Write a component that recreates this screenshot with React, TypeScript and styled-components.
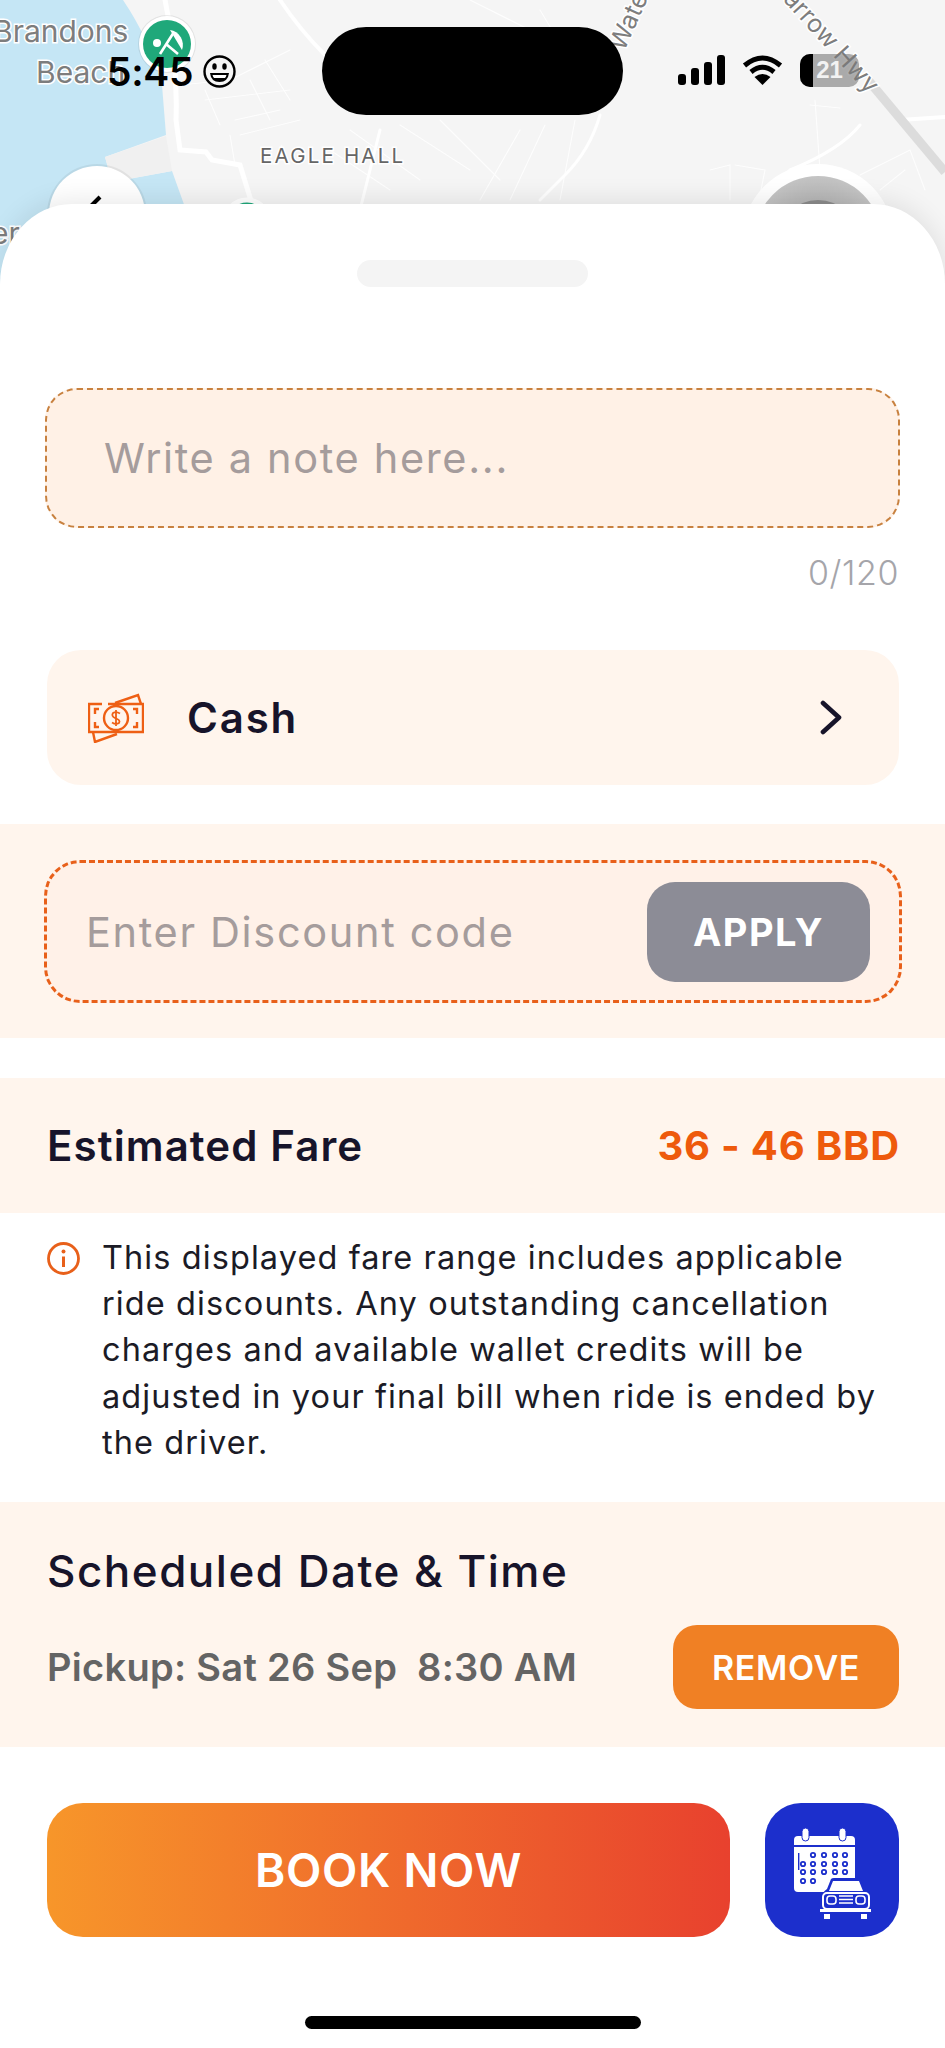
import React from 'react';
import styled, { createGlobalStyle } from 'styled-components';

const GlobalStyle = createGlobalStyle`
  html, body {
    margin: 0;
    padding: 0;
    background: #ffffff;
  }
  * {
    box-sizing: border-box;
  }
`;

const Page = styled.div`
  position: relative;
  width: 945px;
  height: 2048px;
  overflow: hidden;
  background: #ffffff;
  font-family: Inter, "Noto Sans", sans-serif;
`;

const MapBackdrop = styled.svg`
  position: absolute;
  top: 0;
  left: 0;
  width: 945px;
  height: 320px;
`;

const StatusBar = styled.div`
  position: relative;
  height: 115px;
  padding: 27px 0 0 107px;
  display: flex;
  align-items: flex-start;
`;

const Clock = styled.div`
  display: flex;
  align-items: center;
  gap: 10px;
  width: 215px;
  height: 88px;
  font-size: 39px;
  font-weight: 600;
  letter-spacing: -0.3px;
  color: #000000;
  font-family: Inter, sans-serif;
`;

const Island = styled.div`
  width: 301px;
  height: 88px;
  border-radius: 44px;
  background: #000000;
`;

const StatusIcons = styled.div`
  display: flex;
  align-items: center;
  gap: 17px;
  height: 86px;
  margin-left: 55px;
`;

const BatteryShell = styled.div`
  position: relative;
  width: 59px;
  height: 33px;
  border-radius: 10px;
  overflow: hidden;
  display: flex;
  align-items: center;
  justify-content: center;
  background: rgba(120, 120, 120, 0.6);
  color: #f2f2f2;
  font-size: 24px;
  font-weight: 700;
  font-family: "Liberation Sans", sans-serif;
`;

const BatteryFill = styled.div`
  position: absolute;
  top: 0;
  left: 0;
  width: 13px;
  height: 100%;
  background: #000000;
`;

const Sheet = styled.div`
  position: relative;
  margin-top: 89px;
  height: 1844px;
  background: #ffffff;
  border-radius: 72px 72px 0 0 / 80px 80px 0 0;
  box-shadow: 0 -4px 26px rgba(0, 0, 0, 0.09);
  padding-top: 56px;
  display: flex;
  flex-direction: column;
`;

const Handle = styled.div`
  align-self: center;
  width: 231px;
  height: 27px;
  border-radius: 14px;
  background: #f4f4f4;
`;

const NoteBox = styled.div`
  margin: 101px 45px 0 45px;
  height: 140px;
  border: 2px dashed #c8813f;
  border-radius: 32px;
  background: #fff1e6;
  padding-left: 57px;
  display: flex;
  align-items: center;
`;

const Placeholder = styled.span`
  font-size: 41.5px;
  letter-spacing: 1.65px;
  color: #a59c9c;
  white-space: nowrap;
`;

const Counter = styled.div`
  margin: 23px 46px 0 0;
  text-align: right;
  font-size: 34px;
  line-height: 44px;
  font-weight: 300;
  letter-spacing: 0.6px;
  color: #a5a5aa;
`;

const PaymentRow = styled.div`
  margin: 55px 46px 0 47px;
  height: 135px;
  border-radius: 34px;
  background: #fff5ed;
  padding: 0 57px 0 41px;
  display: flex;
  align-items: center;
`;

const PaymentLabel = styled.span`
  flex: 1;
  margin-left: 43px;
  font-size: 42px;
  font-weight: 600;
  letter-spacing: 1.8px;
  color: #17142a;
`;

const DiscountBand = styled.div`
  margin-top: 39px;
  height: 214px;
  padding: 36px 43px 0 44px;
  background: #fff5ed;
`;

const DiscountBox = styled.div`
  height: 143px;
  border: 3px dashed #e8601a;
  border-radius: 36px;
  background: #fff1e8;
  padding: 0 29px 0 39px;
  display: flex;
  align-items: center;
  justify-content: space-between;
`;

const ApplyButton = styled.div`
  width: 223px;
  height: 100px;
  border-radius: 28px;
  background: #8c8c96;
  color: #ffffff;
  font-size: 38px;
  font-weight: 700;
  letter-spacing: 1.5px;
  display: flex;
  align-items: center;
  justify-content: center;
`;

const FareBand = styled.div`
  margin-top: 40px;
  height: 135px;
  padding: 0 45px 0 47px;
  background: #fff5ed;
  display: flex;
  align-items: center;
  justify-content: space-between;
`;

const FareTitle = styled.span`
  font-size: 42px;
  font-weight: 600;
  letter-spacing: 1.1px;
  color: #17142a;
`;

const FareValue = styled.span`
  font-size: 40px;
  font-weight: 700;
  letter-spacing: 0.8px;
  color: #ee5a0c;
`;

const InfoRow = styled.div`
  margin-top: 22px;
  padding: 0 30px 0 47px;
  display: flex;
  gap: 22px;
  align-items: flex-start;
`;

const InfoIconWrap = styled.div`
  flex: none;
  width: 33px;
  height: 46px;
  display: flex;
  align-items: center;
`;

const InfoText = styled.p`
  margin: 0;
  font-size: 32.5px;
  line-height: 46.2px;
  letter-spacing: 1.08px;
  white-space: nowrap;
  color: #1b1b26;
`;

const ScheduleBand = styled.div`
  margin-top: 36px;
  height: 245px;
  padding: 39px 46px 0 47px;
  background: #fff5ed;
`;

const ScheduleTitle = styled.div`
  font-size: 44px;
  line-height: 60px;
  font-weight: 500;
  letter-spacing: 1.5px;
  color: #17142a;
`;

const ScheduleRow = styled.div`
  margin-top: 24px;
  display: flex;
  align-items: center;
  justify-content: space-between;
`;

const PickupText = styled.span`
  font-size: 38px;
  font-weight: 600;
  letter-spacing: 0.3px;
  color: #646464;
  white-space: pre;
`;

const RemoveButton = styled.div`
  width: 226px;
  height: 84px;
  border-radius: 24px;
  background: #f08024;
  color: #ffffff;
  font-size: 34px;
  font-weight: 600;
  letter-spacing: 0.6px;
  display: flex;
  align-items: center;
  justify-content: center;
`;

const ActionRow = styled.div`
  margin-top: 56px;
  padding: 0 46px 0 47px;
  display: flex;
  gap: 35px;
`;

const BookButton = styled.div`
  flex: 1;
  height: 134px;
  border-radius: 36px;
  background: linear-gradient(90deg, #f7962a 0%, #e8412e 100%);
  color: #ffffff;
  font-size: 46px;
  font-weight: 600;
  letter-spacing: 0.7px;
  display: flex;
  align-items: center;
  justify-content: center;
`;

const ScheduleButton = styled.div`
  flex: none;
  width: 134px;
  height: 134px;
  border-radius: 36px;
  background: #1c2fcc;
`;

const HomeIndicator = styled.div`
  align-self: center;
  margin-top: 79px;
  width: 336px;
  height: 13px;
  border-radius: 7px;
  background: #000000;
`;

const MapLabel = styled.text<{ $tone?: string }>`
  font-family: Inter, sans-serif;
  fill: ${p => p.$tone || '#7d7d7d'};
  stroke: #ffffff;
  stroke-width: 3px;
  paint-order: stroke;
`;

const MapRoads = () => (
  <g fill="none" stroke="#ffffff" strokeLinecap="round">
    <path d="M165 0 Q178 60 176 120 L180 150 L206 152 L212 160 L240 165 L252 204" strokeWidth="5" />
    <path d="M280 0 Q300 30 325 55" strokeWidth="4" />
    <path d="M380 130 L360 210" strokeWidth="3" />
    <g strokeWidth="1.2" opacity="0.8">
      <path d="M180 85 L230 80 L290 50 M205 100 L290 90 M235 120 L280 110 M240 135 L300 120" />
      <path d="M250 80 L270 120 M265 60 L290 100 M205 90 L220 125 M230 135 L235 165" />
      <path d="M330 150 L390 190 M350 130 L420 180 M400 125 L470 170 M440 120 L500 180" />
      <path d="M520 130 L480 200 M545 125 L510 200 M575 120 L560 200" />
      <path d="M470 0 L530 30 M540 10 L570 60 M500 40 L560 70" />
      <path d="M815 100 L820 170 M810 105 L840 108 M710 170 L730 165 L730 200 M735 165 L765 170 L760 195" />
      <path d="M860 175 L910 150 L925 190 M880 190 L905 170" />
    </g>
    <path d="M600 115 Q590 150 565 175 L540 200" strokeWidth="3" />
    <path d="M860 125 Q840 150 790 170 L760 200" strokeWidth="3" />
    <path d="M900 120 L945 117" strokeWidth="4" />
  </g>
);

const MapCanvas = () => (
  <MapBackdrop viewBox="0 0 945 320">
    <defs>
      <radialGradient id="dim" cx="50%" cy="50%" r="50%">
        <stop offset="0%" stopColor="#9e9e9e" />
        <stop offset="100%" stopColor="#c4c4c4" />
      </radialGradient>
    </defs>
    <rect width="945" height="320" fill="#f5f5f5" />
    <path
      d="M0 0 H123 Q150 40 162 85 L166 135 L105 157 L112 182 L172 171 L186 210 L190 320 H0 Z"
      fill="#c5e6f5"
    />
    <path d="M105 157 L166 136 L172 171 L112 182 Z" fill="#f0f0f0" />
    <MapRoads />
    <path d="M868 80 L945 172" stroke="#dcdcdc" strokeWidth="9" fill="none" />
    <MapLabel x="-7" y="42" fontSize="30">Brandons</MapLabel>
    <MapLabel x="36" y="83" fontSize="30">Beach</MapLabel>
    <MapLabel x="-28" y="244" fontSize="30">Per</MapLabel>
    <MapLabel x="260" y="163" fontSize="20.5" letterSpacing="2.2" $tone="#666666">EAGLE HALL</MapLabel>
    <MapLabel x="624" y="52" fontSize="25" transform="rotate(-66 624 52)">Water</MapLabel>
    <MapLabel x="770" y="-14" fontSize="25" transform="rotate(48 770 -14)">Harrow Hwy</MapLabel>

    <circle cx="167" cy="44" r="29" fill="#000000" opacity="0.08" />
    <circle cx="167" cy="44" r="28" fill="#ffffff" />
    <circle cx="167" cy="44" r="24" fill="#1fa87a" />
    <path d="M170 30 A15 15 0 0 1 182 50 Z" fill="#ffffff" />
    <path d="M174 32 L160 54 M166 44 L178 54" stroke="#ffffff" strokeWidth="2.6" fill="none" />
    <circle cx="157" cy="43" r="4" fill="#ffffff" />
    <circle cx="247" cy="222" r="22" fill="#1fa87a" stroke="#ffffff" strokeWidth="5" />

    <circle cx="97" cy="214" r="50" fill="#000000" opacity="0.06" />
    <circle cx="97" cy="214" r="48" fill="#ffffff" />
    <path d="M100 197 L90 207" stroke="#000000" strokeWidth="4" fill="none" />
    <circle cx="818" cy="240" r="76" fill="#ffffff" />
    <circle cx="818" cy="240" r="64" fill="url(#dim)" />
    <circle cx="818" cy="240" r="40" fill="#8b8b8b" />
  </MapBackdrop>
);

const SmileIcon = () => (
  <svg width="33" height="33" viewBox="0 0 33 33">
    <circle cx="16.5" cy="16.5" r="15" fill="none" stroke="#000" strokeWidth="2.4" />
    <ellipse cx="11.5" cy="11.5" rx="2.2" ry="3.2" fill="#000" />
    <ellipse cx="21.5" cy="11.5" rx="2.2" ry="3.2" fill="#000" />
    <path d="M7 18 H26 Q25 27 16.5 27 Q8 27 7 18 Z" fill="#000" />
    <path d="M9.5 20 H23.5 Q23 22 22 23 H11 Q10 22 9.5 20 Z" fill="#fff" />
  </svg>
);

const SignalIcon = () => (
  <svg width="47" height="30" viewBox="0 0 47 30" fill="#000">
    <rect x="0" y="19" width="8" height="11" rx="3" />
    <rect x="13" y="13" width="8" height="17" rx="3" />
    <rect x="26" y="7" width="8" height="23" rx="3" />
    <rect x="39" y="0" width="8" height="30" rx="3" />
  </svg>
);

const WifiIcon = () => (
  <svg width="41" height="30" viewBox="0 0 41 30" fill="none" stroke="#000" strokeWidth="5">
    <path d="M2.5 10.5 Q20.5 -4.5 38.5 10.5" />
    <path d="M9 17 Q20.5 7.5 32 17" />
    <path d="M20.5 30 L12.5 22 Q20.5 16 28.5 22 Z" fill="#000" stroke="none" />
  </svg>
);

const CashIcon = () => (
  <svg width="56" height="50" viewBox="0 0 56 50" fill="none" stroke="#ee5f14" strokeWidth="2.4" style={{ flex: 'none' }}>
    <path d="M27 10 L50 2 L53 11" />
    <path d="M5 39 L7 49 L29 41" />
    <path d="M14 11 H1 V39 H55 V11 H20" />
    <circle cx="28" cy="25" r="12" fill="#fff5ed" />
    <path d="M7 21 V16 H11 M49 21 V16 H45 M7 29 V34 H11 M49 29 V34 H45" />
    <path d="M32 20.5 Q28 18 25 20 Q23 23 27 25 Q33 27 31 30 Q28 32 24 29.5 M28 17 V33" strokeWidth="1.8" />
  </svg>
);

const ChevronIcon = () => (
  <svg width="22" height="35" viewBox="0 0 22 35" fill="none" stroke="#17142a" strokeWidth="4.6" strokeLinecap="round" strokeLinejoin="round" style={{ flex: 'none' }}>
    <path d="M3 3 L19 17.5 L3 32" />
  </svg>
);

const InfoIcon = () => (
  <svg width="33" height="33" viewBox="0 0 33 33" fill="none" stroke="#e8601a" strokeWidth="2.8">
    <circle cx="16.5" cy="16.5" r="15" />
    <path d="M16.5 14.5 V25" strokeWidth="3" />
    <circle cx="16.5" cy="9.5" r="2" fill="#e8601a" stroke="none" />
  </svg>
);

// dot grid of the calendar, first row and last row are shorter
const dotRows = [
  { y: 52, cols: [48, 59, 70, 80] },
  { y: 61, cols: [38, 48, 59, 70, 80] },
  { y: 69, cols: [38, 48, 59, 70, 80] },
  { y: 78, cols: [38, 48] },
];

const CalendarCarIcon = () => (
  <svg width="134" height="134" viewBox="0 0 134 134">
    <path d="M29 37 Q29 33 33 33 H86 Q90 33 90 37 V42 H29 Z" fill="#fff" />
    <path d="M29 44 H90 V89 H33 Q29 89 29 85 Z" fill="#fff" />
    <rect x="37" y="25" width="7" height="13" rx="3.5" fill="#fff" stroke="#1c2fcc" strokeWidth="1" />
    <rect x="74" y="25" width="7" height="13" rx="3.5" fill="#fff" stroke="#1c2fcc" strokeWidth="1" />
    <rect x="33" y="50" width="1.4" height="17" fill="#1c2fcc" />
    {dotRows.map(row =>
      row.cols.map(x => (
        <circle key={`${row.y}-${x}`} cx={x} cy={row.y} r="2.2" fill="none" stroke="#1c2fcc" strokeWidth="1.8" />
      ))
    )}
    <path d="M62 86 L66 76 Q67 75 69 75 H93 Q95 75 96 76 L101 88 Q106 92 106 97 V106 H56 V97 Q56 90 62 86 Z" fill="#1c2fcc" />
    <path d="M68 78 H94 L98 88 H64 Z" fill="#fff" />
    <rect x="58" y="90" width="46" height="16" rx="4" fill="#1c2fcc" stroke="#fff" strokeWidth="2" />
    <rect x="62" y="93" width="9" height="8" rx="3" fill="#1c2fcc" stroke="#fff" strokeWidth="1.6" />
    <rect x="91" y="93" width="9" height="8" rx="3" fill="#1c2fcc" stroke="#fff" strokeWidth="1.6" />
    <path d="M74 93 H88 M74 96.5 H88 M74 100 H88" stroke="#fff" strokeWidth="1.4" />
    <rect x="55" y="106" width="51" height="3" fill="#fff" />
    <rect x="59" y="111" width="6" height="5" fill="#fff" />
    <rect x="96" y="111" width="6" height="5" fill="#fff" />
  </svg>
);

const App: React.FC = () => {
  return (
    <Page>
      <GlobalStyle />
      <MapCanvas />
      <StatusBar>
        <Clock>
          5:45
          <SmileIcon />
        </Clock>
        <Island />
        <StatusIcons>
          <SignalIcon />
          <WifiIcon />
          <BatteryShell>
            <BatteryFill />
            21
          </BatteryShell>
        </StatusIcons>
      </StatusBar>
      <Sheet>
        <Handle />
        <NoteBox>
          <Placeholder>Write a note here...</Placeholder>
        </NoteBox>
        <Counter>0/120</Counter>
        <PaymentRow>
          <CashIcon />
          <PaymentLabel>Cash</PaymentLabel>
          <ChevronIcon />
        </PaymentRow>
        <DiscountBand>
          <DiscountBox>
            <Placeholder>Enter Discount code</Placeholder>
            <ApplyButton>APPLY</ApplyButton>
          </DiscountBox>
        </DiscountBand>
        <FareBand>
          <FareTitle>Estimated Fare</FareTitle>
          <FareValue>36 - 46 BBD</FareValue>
        </FareBand>
        <InfoRow>
          <InfoIconWrap>
            <InfoIcon />
          </InfoIconWrap>
          <InfoText>
            This displayed fare range includes applicable
            <br />
            ride discounts. Any outstanding cancellation
            <br />
            charges and available wallet credits will be
            <br />
            adjusted in your final bill when ride is ended by
            <br />
            the driver.
          </InfoText>
        </InfoRow>
        <ScheduleBand>
          <ScheduleTitle>Scheduled Date &amp; Time</ScheduleTitle>
          <ScheduleRow>
            <PickupText>{'Pickup: Sat 26 Sep  8:30 AM'}</PickupText>
            <RemoveButton>REMOVE</RemoveButton>
          </ScheduleRow>
        </ScheduleBand>
        <ActionRow>
          <BookButton>BOOK NOW</BookButton>
          <ScheduleButton>
            <CalendarCarIcon />
          </ScheduleButton>
        </ActionRow>
        <HomeIndicator />
      </Sheet>
    </Page>
  );
};

export default App;
